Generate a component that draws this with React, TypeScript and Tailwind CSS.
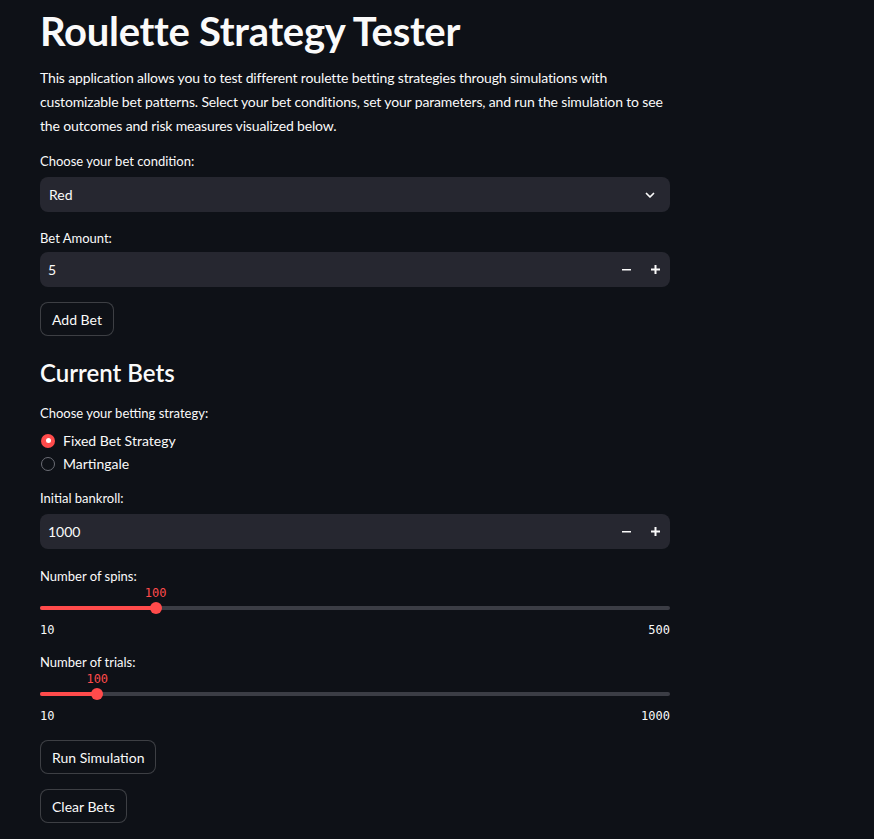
import { useState } from "react";

const sans = { fontFamily: "Lato, 'Noto Sans', sans-serif" };

function Label({ text }: { text: string }) {
  return <div className="text-[13px] leading-[20px] text-[#fafafa]">{text}</div>;
}

function NumberInput({ value }: { value: string }) {
  return (
    <div className="flex h-[35px] items-center rounded-lg bg-[#262730] pl-[8px] text-[14px] text-[#fafafa]">
      <span className="flex-1">{value}</span>
      <span className="flex w-[29px] justify-center">
        <svg width="9" height="2" viewBox="0 0 9 2"><rect width="9" height="1.5" fill="#fafafa" /></svg>
      </span>
      <span className="flex w-[29px] justify-center">
        <svg width="9" height="9" viewBox="0 0 9 9">
          <rect y="3.5" width="9" height="2" fill="#fafafa" />
          <rect x="3.5" width="2" height="9" fill="#fafafa" />
        </svg>
      </span>
    </div>
  );
}

function Slider({ min, max, value }: { min: number; max: number; value: number }) {
  const pct = ((value - min) / (max - min)) * 100;
  return (
    <div style={{ fontFamily: "'DejaVu Sans Mono', 'Liberation Mono', monospace" }}>
      <div className="relative h-[14px]">
        <span
          className="absolute top-0 -translate-x-1/2 text-[12px] leading-[14px] text-[#ff4b4b]"
          style={{ left: `${pct}%` }}
        >
          {value}
        </span>
      </div>
      <div className="relative flex h-[16px] items-center">
        <div className="h-[4px] w-full rounded bg-[#3b3d45]">
          <div className="h-full rounded bg-[#ff4b4b]" style={{ width: `${pct}%` }} />
        </div>
        <div
          className="absolute top-[2px] h-[12px] w-[12px] -translate-x-1/2 rounded-full bg-[#ff4b4b]"
          style={{ left: `${pct}%` }}
        />
      </div>
      <div className="mt-[6px] flex justify-between text-[12px] leading-[16px] text-[#fafafa]">
        <span>{min}</span>
        <span>{max}</span>
      </div>
    </div>
  );
}

function Btn({ text }: { text: string }) {
  return (
    <button className="h-[34px] w-fit rounded-lg border border-[#fafafa33] bg-[#0e1117] px-[11px] text-[14px] text-[#fafafa]">
      {text}
    </button>
  );
}

export default function App() {
  const [strategy, setStrategy] = useState("Fixed Bet Strategy");

  return (
    <div className="min-h-[839px] bg-[#0e1117] text-[#fafafa]" style={sans}>
      <div className="flex w-[670px] flex-col pl-[40px] pt-[5px]">
        <h1 className="text-[40px] font-bold leading-[53px] tracking-[-0.3px]">Roulette Strategy Tester</h1>
        <p className="mt-[8px] whitespace-nowrap text-[14px] leading-[24px] tracking-[-0.15px]">
          This application allows you to test different roulette betting strategies through simulations with
          <br />
          customizable bet patterns. Select your bet conditions, set your parameters, and run the simulation to see
          <br />
          the outcomes and risk measures visualized below.
        </p>

        <div className="mt-[13px]">
          <Label text="Choose your bet condition:" />
        </div>
        <div className="mt-[6px] flex h-[35px] items-center justify-between rounded-lg bg-[#262730] pl-[9px] pr-[14px] text-[14px]">
          <span>Red</span>
          <svg width="12" height="12" viewBox="0 0 24 24" fill="none" stroke="#fafafa" strokeWidth="3.5" strokeLinecap="round" strokeLinejoin="round">
            <path d="M5 9l7 7 7-7" />
          </svg>
        </div>

        <div className="mt-[16px]">
          <Label text="Bet Amount:" />
        </div>
        <div className="mt-[4px]">
          <NumberInput value="5" />
        </div>

        <div className="mt-[15px]">
          <Btn text="Add Bet" />
        </div>

        <h3 className="mt-[21px] text-[24px] font-semibold leading-[32px]">Current Bets</h3>

        <div className="mt-[14px]">
          <Label text="Choose your betting strategy:" />
        </div>
        <div className="mt-[6px] flex flex-col">
          {["Fixed Bet Strategy", "Martingale"].map((opt) => (
            <label
              key={opt}
              className="flex h-[23px] cursor-pointer items-center gap-[8px] text-[14px]"
              onClick={() => setStrategy(opt)}
            >
              {strategy === opt ? (
                <span className="ml-[1px] flex h-[14px] w-[14px] items-center justify-center rounded-full bg-[#ff4b4b]">
                  <span className="h-[5px] w-[5px] rounded-full bg-white" />
                </span>
              ) : (
                <span className="ml-[1px] h-[14px] w-[14px] rounded-full border border-[#6b6d75] bg-[#0e1117]" />
              )}
              {opt}
            </label>
          ))}
        </div>

        <div className="mt-[13px]">
          <Label text="Initial bankroll:" />
        </div>
        <div className="mt-[6px]">
          <NumberInput value="1000" />
        </div>

        <div className="mt-[17px]">
          <Label text="Number of spins:" />
        </div>
        <Slider min={10} max={500} value={100} />

        <div className="mt-[14px]">
          <Label text="Number of trials:" />
        </div>
        <Slider min={10} max={1000} value={100} />

        <div className="mt-[16px]">
          <Btn text="Run Simulation" />
        </div>
        <div className="mt-[15px]">
          <Btn text="Clear Bets" />
        </div>
      </div>
    </div>
  );
}
